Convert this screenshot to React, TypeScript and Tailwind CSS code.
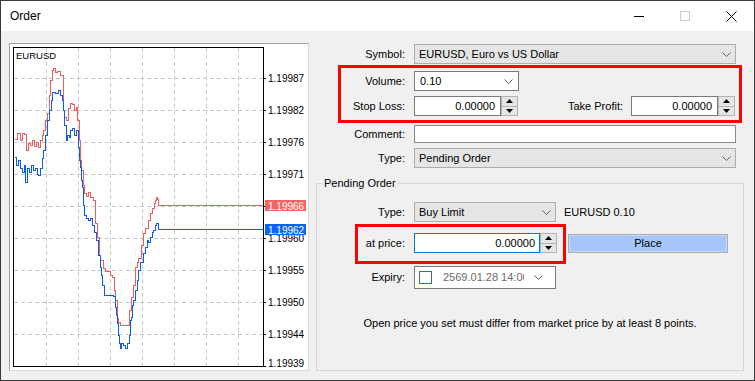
import React from "react";

const red: number[][] = [
  [14, 139], [17, 133], [20, 140], [22, 133], [24, 134], [26, 150], [28, 143], [30, 145], [32, 140], [34, 146],
  [36, 142], [38, 147], [40, 140], [42, 135], [43, 130], [45, 120], [47, 113], [49, 95], [50, 80], [52, 70],
  [53, 68], [55, 72], [57, 71], [60, 75], [62, 75], [63, 110], [64, 117], [66, 120], [68, 108], [70, 103],
  [72, 104], [74, 110], [76, 107], [77, 120], [79, 140], [80, 160], [81, 170], [83, 185], [84, 193], [86, 196],
  [88, 192], [90, 197], [93, 200], [95, 223], [97, 237], [99, 255], [100, 260], [103, 268], [105, 271], [107, 271],
  [110, 275], [112, 277], [114, 290], [115, 300], [117, 318], [118, 322], [120, 325], [124, 325], [128, 325], [129, 310],
  [131, 297], [133, 285], [135, 267], [137, 262], [138, 258], [141, 245], [143, 233], [145, 228], [148, 220], [150, 213],
  [152, 208], [154, 203], [155, 200], [156, 197], [157, 199], [158, 205], [263, 205],
];

const blue: number[][] = [
  [14, 157], [16, 165], [18, 160], [20, 168], [22, 172], [24, 165], [25, 182], [27, 168], [29, 172], [31, 165],
  [33, 170], [35, 168], [37, 174], [38, 175], [40, 168], [42, 158], [43, 150], [45, 135], [47, 120], [49, 110],
  [51, 100], [52, 92], [55, 93], [58, 90], [60, 95], [62, 100], [63, 110], [64, 125], [66, 140], [67, 135],
  [69, 137], [70, 130], [72, 128], [74, 135], [76, 130], [78, 147], [79, 160], [80, 167], [81, 180], [82, 187],
  [83, 205], [84, 215], [86, 218], [88, 220], [90, 218], [92, 225], [94, 232], [96, 240], [98, 255], [100, 267],
  [101, 275], [102, 285], [104, 295], [108, 295], [112, 295], [113, 296], [115, 307], [116, 315], [117, 323], [118, 335],
  [119, 343], [120, 348], [121, 343], [123, 345], [125, 348], [127, 343], [128, 343], [129, 335], [130, 320], [131, 317],
  [132, 305], [133, 300], [135, 290], [137, 280], [138, 270], [140, 262], [143, 253], [145, 247], [147, 240], [148, 242],
  [150, 237], [152, 232], [153, 230], [155, 225], [156, 223], [158, 229], [263, 229],
];

// step path on half-pixel coords so 1px strokes stay crisp
const stepPath = (pts: number[][]) =>
  pts.map((p, i) => (i === 0 ? `M${p[0] + 0.5} ${p[1] + 0.5}` : `H${p[0] + 0.5} V${p[1] + 0.5}`)).join(" ");

const vx = [46, 78, 110, 142, 174, 206, 238];
const hy = [78, 110, 142, 174, 206, 238, 270, 302, 334];
const prices: [string, number][] = [
  ["1.19987", 78],
  ["1.19982", 110],
  ["1.19976", 142],
  ["1.19971", 174],
  ["1.19960", 238],
  ["1.19955", 270],
  ["1.19950", 302],
  ["1.19944", 334],
  ["1.19939", 363],
];

function Chart() {
  return (
    <svg width="298" height="326" viewBox="10 44 298 326" className="block">
      {vx.map((x) => (
        <line key={x} x1={x + 0.5} y1={48} x2={x + 0.5} y2={366} stroke="#c8c8c8" strokeDasharray="4 3" />
      ))}
      {hy.map((y) => (
        <line key={y} x1={14} y1={y + 0.5} x2={263} y2={y + 0.5} stroke="#c8c8c8" strokeDasharray="4 3" />
      ))}
      <path d={stepPath(red)} fill="none" stroke="#f25c5c" strokeWidth="1" shapeRendering="crispEdges" />
      <path d={stepPath(blue)} fill="none" stroke="#0a5cf2" strokeWidth="1" shapeRendering="crispEdges" />
      <rect x={13.5} y={47.5} width={250} height={319} fill="none" stroke="#000" />
      {[...hy, 366].map((y) => (
        <line key={y} x1={264} y1={y + 0.5} x2={266} y2={y + 0.5} stroke="#000" />
      ))}
      <text x={16} y={58.5} fontSize="9.5" fill="#000" fontFamily="Liberation Sans, Arial, sans-serif">
        EURUSD
      </text>
      {prices.map(([p, y]) => (
        <text key={p} x={268} y={y + 4} fontSize="10" fill="#000" fontFamily="Liberation Sans, Arial, sans-serif">
          {p}
        </text>
      ))}
      <rect x={265} y={200} width={41} height={11} fill="#f36565" />
      <text x={268} y={209.5} fontSize="10" fill="#fff" fontFamily="Liberation Sans, Arial, sans-serif">
        1.19966
      </text>
      <rect x={265} y={224} width={41} height={11} fill="#0d63f2" />
      <text x={268} y={233.5} fontSize="10" fill="#fff" fontFamily="Liberation Sans, Arial, sans-serif">
        1.19962
      </text>
    </svg>
  );
}

const Chevron = () => (
  <svg width="9" height="5" viewBox="0 0 9 5" className="shrink-0">
    <path d="M0.5 0.5 L4.5 4.5 L8.5 0.5" fill="none" stroke="#5f5f5f" strokeWidth="1" />
  </svg>
);

function Spinner() {
  return (
    <div className="flex h-full w-[17px] shrink-0 flex-col border border-[#b4b4b4] bg-[#e6e6e6]">
      <div className="flex flex-1 items-center justify-center border-b border-[#b4b4b4]">
        <svg width="7" height="4">
          <polygon points="0,4 3.5,0 7,4" fill="#000" />
        </svg>
      </div>
      <div className="flex flex-1 items-center justify-center">
        <svg width="7" height="4">
          <polygon points="0,0 7,0 3.5,4" fill="#000" />
        </svg>
      </div>
    </div>
  );
}

export default function App() {
  return (
    <div className="flex h-[381px] w-[755px] flex-col overflow-hidden border border-[#3a3a3a] bg-[#f0f0f0] font-['Liberation_Sans',Arial,sans-serif] text-[11px] text-black">
      {/* title bar */}
      <div className="flex h-[30px] shrink-0 items-center bg-white">
        <span className="pl-[9px] text-[12px]">Order</span>
        <div className="ml-auto flex h-full">
          <div className="flex w-[46px] items-center justify-center">
            <svg width="10" height="10">
              <line x1="0" y1="5.5" x2="10" y2="5.5" stroke="#000" />
            </svg>
          </div>
          <div className="flex w-[46px] items-center justify-center">
            <svg width="10" height="10">
              <rect x="0.5" y="0.5" width="9" height="9" fill="none" stroke="#cccccc" />
            </svg>
          </div>
          <div className="flex w-[46px] items-center justify-center">
            <svg width="11" height="11">
              <path d="M0.5 0.5 L10.5 10.5 M10.5 0.5 L0.5 10.5" stroke="#000" strokeWidth="1" />
            </svg>
          </div>
        </div>
      </div>

      {/* body */}
      <div className="flex flex-1 pl-[8px] pt-[12px]">
        <div className="h-[328px] w-[300px] shrink-0 border border-b-[#dadada] border-l-[#a0a0a0] border-r-[#dadada] border-t-[#a0a0a0] bg-white">
          <Chart />
        </div>

        <div className="relative ml-[7px] flex w-[428px] flex-col pr-[8px]">
          <div className="mt-[1px] flex h-[20px] items-center">
            <div className="w-[89px] text-right">Symbol:</div>
            <div className="ml-[9px] flex h-full flex-1 items-center justify-between border border-[#adadad] bg-[#e5e5e5] px-[4px]">
              <span>EURUSD, Euro vs US Dollar</span>
              <Chevron />
            </div>
          </div>

          <div className="mt-[7px] flex h-[20px] items-center">
            <div className="w-[89px] text-right">Volume:</div>
            <div className="ml-[9px] flex h-full w-[105px] items-center justify-between border border-[#7a7a7a] bg-white pl-[5px] pr-[5px]">
              <span>0.10</span>
              <Chevron />
            </div>
          </div>

          <div className="mt-[5px] flex h-[20px] items-center">
            <div className="w-[89px] text-right">Stop Loss:</div>
            <div className="ml-[9px] flex h-full">
              <div className="flex h-full w-[87px] items-center justify-end border border-[#7a7a7a] bg-white pr-[5px]">
                0.00000
              </div>
              <Spinner />
            </div>
            <div className="ml-auto mr-[1px] flex h-full items-center">
              <span>Take Profit:</span>
              <div className="ml-[8px] flex h-full">
                <div className="flex h-full w-[87px] items-center justify-end border border-[#7a7a7a] bg-white pr-[5px]">
                  0.00000
                </div>
                <Spinner />
              </div>
            </div>
          </div>

          <div className="mt-[9px] flex h-[18px] items-center">
            <div className="w-[89px] text-right">Comment:</div>
            <div className="ml-[9px] h-full flex-1 border border-[#8a8a8a] bg-white" />
          </div>

          <div className="mt-[5px] flex h-[20px] items-center">
            <div className="w-[89px] text-right">Type:</div>
            <div className="ml-[9px] flex h-full flex-1 items-center justify-between border border-[#adadad] bg-[#e5e5e5] px-[4px]">
              <span>Pending Order</span>
              <Chevron />
            </div>
          </div>

          <fieldset className="mr-[-8px] mt-[8px] h-[195px] border border-[#d5d5d5]">
            <legend className="ml-[5px] px-[2px] leading-[14px]">Pending Order</legend>

            <div className="mt-[12px] flex h-[20px] items-center">
              <div className="w-[88px] text-right">Type:</div>
              <div className="ml-[9px] flex h-full w-[142px] items-center justify-between border border-[#adadad] bg-[#e5e5e5] px-[4px]">
                <span>Buy Limit</span>
                <Chevron />
              </div>
              <span className="ml-[8px]">EURUSD 0.10</span>
            </div>

            <div className="mt-[11px] flex h-[20px] items-center">
              <div className="w-[88px] text-right">at price:</div>
              <div className="ml-[9px] flex h-full">
                <div className="flex h-full w-[126px] items-center justify-end border border-[#0078d7] bg-white pr-[4px]">
                  0.00000
                </div>
                <Spinner />
              </div>
              <div className="ml-[11px] flex h-[19px] w-[160px] items-center justify-center border border-[#adadad] bg-[#a6c5f8] shadow-[inset_0_0_0_1px_#c3d8fb]">
                Place
              </div>
            </div>

            <div className="mt-[13px] flex h-[23px] items-center">
              <div className="w-[88px] text-right">Expiry:</div>
              <div className="ml-[9px] flex h-full w-[142px] items-center border border-[#7a7a7a] bg-white pl-[4px] pr-[12px]">
                <div className="h-[13px] w-[13px] shrink-0 border border-[#2b6cc4] bg-white" />
                <span className="ml-[11px] w-[81px] overflow-hidden whitespace-nowrap text-[#6d6d6d]">2569.01.28 14:00</span>
                <div className="ml-auto">
                  <Chevron />
                </div>
              </div>
            </div>

            <div className="mt-[26px] text-center">
              Open price you set must differ from market price by at least 8 points.
            </div>
          </fieldset>

          {/* annotation boxes */}
          <div className="absolute left-[22px] top-[22px] h-[58px] w-[404px] border-[3px] border-[#ff0000]" />
          <div className="absolute left-[39px] top-[181px] h-[40px] w-[211px] border-[3px] border-[#ff0000]" />
        </div>
      </div>
    </div>
  );
}
